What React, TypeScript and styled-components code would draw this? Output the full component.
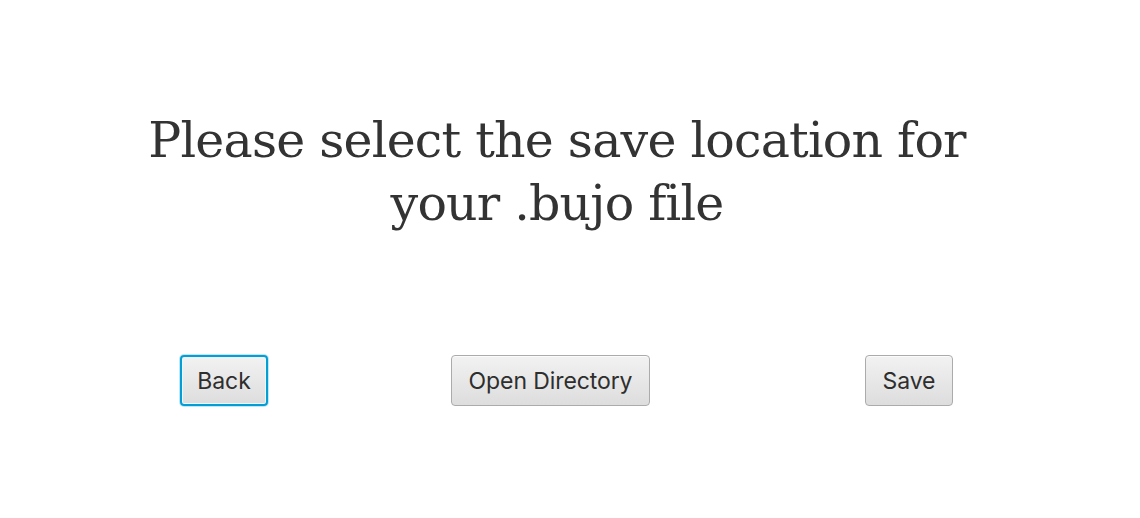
import React from "react";
import styled, { createGlobalStyle } from "styled-components";

const Global = createGlobalStyle`
  html, body { margin: 0; padding: 0; background: #ffffff; }
  #root { width: 1140px; height: 518px; }
`;

const Page = styled.div`
  width: 1140px;
  height: 518px;
  display: flex;
  flex-direction: column;
  background: #ffffff;
`;

const Title = styled.h1`
  margin: 0;
  padding-top: 109px;
  width: 1114px;
  text-align: center;
  font-family: "DejaVu Serif", Georgia, serif;
  font-weight: 400;
  font-size: 49px;
  letter-spacing: -0.8px;
  line-height: 63px;
  color: #333333;
`;

const ButtonRow = styled.div`
  display: flex;
  align-items: center;
  padding-left: 180px;
  margin-top: 120px;
`;

const Button = styled.button<{ $offset?: number; $width: number; $focused?: boolean }>`
  margin-left: ${(p) => p.$offset ?? 0}px;
  width: ${(p) => p.$width}px;
  height: 51px;
  padding: 0;
  box-sizing: border-box;
  font-family: Inter, "Liberation Sans", Arial, sans-serif;
  font-size: 23px;
  letter-spacing: -0.1px;
  color: #2e2e2e;
  background: linear-gradient(#f2f2f2, #dddddd);
  border: 1px solid #ababab;
  border-radius: 4px;
  box-shadow: inset 0 1px 0 #fbfbfb;
  cursor: default;
  ${(p) =>
    p.$focused &&
    `
    border: 2px solid #039ed3;
    box-shadow: inset 0 0 0 1px #eaf6fb, 0 0 0 1px rgba(3,158,211,0.25);
  `}
`;

export default function App() {
  return (
    <Page>
      <Global />
      <Title>
        Please select the save location for
        <br />
        your .bujo file
      </Title>
      <ButtonRow>
        <Button $focused $width={88}>Back</Button>
        <Button $offset={183} $width={199}>Open Directory</Button>
        <Button $offset={215} $width={88}>Save</Button>
      </ButtonRow>
    </Page>
  );
}
